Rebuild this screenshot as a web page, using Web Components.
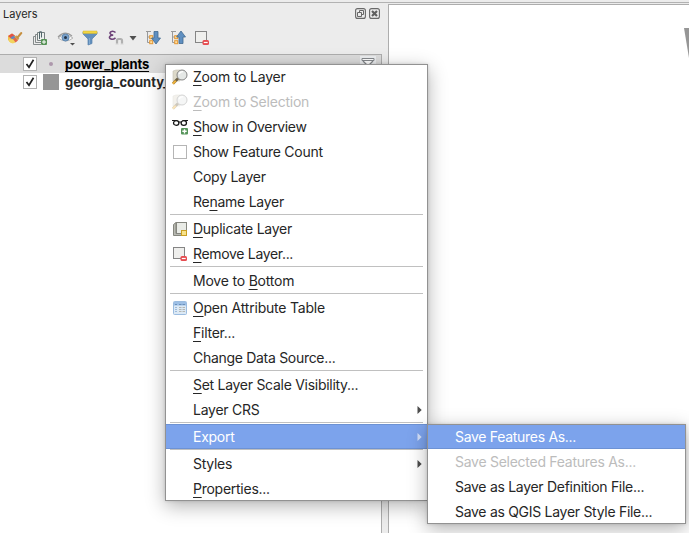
<!DOCTYPE html>
<html lang="en">
<head>
<meta charset="utf-8">
<title>Layers</title>
<style>
html,body{margin:0;height:100%;overflow:hidden}
body{font-family:Inter,"Liberation Sans",sans-serif;color:#262626;background:#ececec}
</style>
</head>
<body>
<gis-window></gis-window>
<script>
const ICONS = {
  style: ['0 0 16 16', `<path d="M1 6L5 3.500L11 8L8 12.500Q3 13.500 1 10Z" fill="#efc04f"/><path d="M1 6L5 3.500L8 5.500L4 8.500Z" fill="#e45344"/><path d="M3.500 7.500L7 5.500L8.500 8L5 9.500Z" fill="#6488bd"/><path d="M2 9L6 9.500L9.500 11.500L6 13.500Q3 13 2 11.500Z" fill="#f2d45f"/><path d="M6 9L8.500 7.500L11 10.500L8.500 12.500Z" fill="#e4674b"/><path d="M8.500 6L11.500 9.500" stroke="#d4a052" stroke-width="2.200"/><path d="M10.500 7.500L14.300 3" stroke="#c69040" stroke-width="2" stroke-linecap="round"/>`],
  group: ['0 0 16 16', `<path d="M3.500 6.500H1.500V14.500H9M5.500 4.500H3.500V12.500H9" fill="none" stroke="#858b8b"/><path d="M9 10.500H5.500V2.500H12.500V9" fill="#edf0ee" stroke="#778080"/><path d="M7.500 9V2Q8.500 0 9.500 2V7.500" fill="none" stroke="#52676d"/><rect x="9" y="9" width="6" height="6" rx="1" fill="#579257"/><path d="M10 12H14M12 10V14" stroke="#fff"/>`],
  eye: ['0 0 18 16', `<path d="M1 8Q8 2 16 8Q9 14 1 8Z" fill="#f6f6f6" stroke="#b8b8b8"/><path d="M1 7Q8 0 15 6" fill="none" stroke="#999" stroke-width="1.200"/><circle cx="8.500" cy="7.500" r="3.500" fill="#7ba3cd" stroke="#5f88b0"/><circle cx="8.500" cy="7.500" r="1.500" fill="#243549"/><path d="M13 13H18L15.500 15.500Z" fill="#505050"/>`],
  filter: ['0 0 16 16', `<path d="M1 2H15V4L10 9V13.500L6 15V9L1 4Z" fill="#628fbd" stroke="#5681ac" stroke-width=".7"/><path d="M1 1H15V3.500H1Z" fill="#f2d541" stroke="#d0b52f" stroke-width=".5"/><path d="M7.500 8V14" stroke="#82aad0"/>`],
  expr: ['0 0 17 16', `<path d="M8.500 2.500Q6.500 .7 4.500 1.400C2 2.200 2.800 5.200 6.200 5.100C2.200 5 1.400 8.300 4 9Q6.300 9.700 8.500 7.800" fill="none" stroke="#6d4378" stroke-width="1.600"/><path d="M10 15V10.500Q10 9 11.500 9H13.500Q15 9 15 10.500V15" fill="none" stroke="#b0b0b0" stroke-width="2.200"/><path d="M9 13.500H11V15H9ZM14 13.500H16V15H14Z" fill="#e0e0e0"/>`],
  caret: ['0 0 8 5', `<path d="M.5 0H7.500L4 4.500Z" fill="#505050"/>`],
  expand: ['0 0 16 16', `<path d="M1 1.500H6M2.500 2V12.500H5M2.500 7H5" fill="none" stroke="#999"/><rect x="4.700" y="5.700" width="3" height="3" fill="#ffe0a0" stroke="#e49734"/><rect x="4.700" y="10.700" width="3" height="3" fill="#ffe0a0" stroke="#e49734"/><path d="M9 1.500H13V8H15.500L11 14L6.500 8H9Z" fill="#5f8fc1" stroke="#41698f" stroke-width=".8"/>`],
  collapse: ['0 0 16 16', `<path d="M1 1.500H6M2.500 2V12.500H5M2.500 7H5" fill="none" stroke="#999"/><rect x="4.700" y="5.700" width="3" height="3" fill="#ffe0a0" stroke="#e49734"/><rect x="4.700" y="10.700" width="3" height="3" fill="#ffe0a0" stroke="#e49734"/><path d="M9 13.500H13V7H15.500L11 1L6.500 7H9Z" fill="#5f8fc1" stroke="#41698f" stroke-width=".8"/>`],
  remove: ['0 0 16 16', `<rect x="1.500" y="1.500" width="11" height="11" fill="#efefed" stroke="#858585"/><rect x="8.500" y="10" width="6.500" height="5" rx="1.500" fill="#e64c50"/><path d="M9.800 12.500H13.700" stroke="#fff" stroke-width="1.200"/>`],
  zoom: ['0 0 16 16', `<path d="M1 2L4 1H8V12H1Z" fill="#ddd9c9" stroke="#c4c0b3" stroke-width=".6"/><path d="M6 9.500L1 14.500" stroke="#6f6245" stroke-width="2.600"/><path d="M3.800 11.700L.8 14.700" stroke="#edb13a" stroke-width="2.200"/><circle cx="10" cy="6" r="5" fill="#e5e8e6" stroke="#858585"/><path d="M7.200 5Q8 2.700 11 2.700" fill="none" stroke="#fff" stroke-width="1.300"/>`],
  glasses: ['0 0 16 16', `<path d="M0 1.500H4.500L7 3H9L11.500 1.500H16" fill="none" stroke="#171717"/><ellipse cx="4.200" cy="4" rx="2.700" ry="2.300" fill="#fff" stroke="#171717" stroke-width="1.300"/><ellipse cx="11.800" cy="4" rx="2.700" ry="2.300" fill="#fff" stroke="#171717" stroke-width="1.300"/><rect x="9" y="9" width="7" height="6.500" rx="1" fill="#559459"/><path d="M10.300 12.300H14.700M12.500 10.200V14.400" stroke="#fff" stroke-width="1.400"/>`],
  box: ['0 0 16 16', `<rect x="1.500" y="1.500" width="13" height="13" fill="#fff" stroke="#b5b5b5"/>`],
  duplicate: ['0 0 16 16', `<path d="M1.500 3.500L4 1.500V12.500H11V14.500H1.500Z" fill="#b8b9b2" stroke="#85867d"/><rect x="4.500" y="1.500" width="10" height="11" fill="#e9ebe6" stroke="#85867f"/><rect x="9.500" y="9.500" width="5" height="5" fill="#f7e28b" stroke="#c99f23"/>`],
  table: ['0 0 16 16', `<rect x="1.500" y="1.500" width="13" height="13" rx="1" fill="#dce9f5" stroke="#9bbce0"/><path d="M2 2H14V5.500H2Z" fill="#9dbfe5"/><path d="M3 4.500H5M7 4.500H9.500M10.500 4.500H13" stroke="#6b90bb"/><path d="M3 7.500H5M3 9.500H5M3 11.500H5" stroke="#9cbbdb"/><path d="M7 7.500H9.500M10.500 7.500H13M7 9.500H9.500M10.500 9.500H13M7 11.500H9.500M10.500 11.500H13" stroke="#b4b6b2"/>`],
  float: ['0 0 11 11', `<rect x=".6" y=".6" width="9.800" height="9.800" rx="2" fill="none" stroke="#686868" stroke-width="1.100"/><path d="M4.500 4V2.500H8.500V6.500H7M2.500 4.500H6.500V8.500H2.500Z" fill="none" stroke="#686868"/>`],
  close: ['0 0 11 11', `<rect x=".6" y=".6" width="9.800" height="9.800" rx="2" fill="none" stroke="#686868" stroke-width="1.100"/><path d="M3 3L8 8M8 3L3 8" stroke="#606060" stroke-width="2.200"/>`],
  indicator: ['0 0 16 18', `<path d="M0 1H16V18H0Z" fill="#eceef0"/><path d="M2 3.500H14V5.500H2Z" fill="#fff" stroke="#85888c"/><path d="M3 6L7 10V16H9V10L13 6" fill="#fff" stroke="#85888c" stroke-width="1.300"/>`],
  check: ['0 0 14 14', `<rect x=".5" y=".5" width="13" height="13" fill="#fff" stroke="#b2b2b2"/><path d="M3.500 7L6 10.200L10.500 2.800" fill="none" stroke="#222" stroke-width="1.700"/>`],
  arrow: ['0 0 5 8', `<path d="M.5 0L4.700 4L.5 8Z" fill="currentColor"/>`]
};

function shadow(el, html) {
  el.attachShadow({mode: 'open'}).innerHTML = html;
}

class GisIcon extends HTMLElement {
  connectedCallback() {
    const [box, body] = ICONS[this.getAttribute('name')];
    const [, , w, h] = box.split(' ');
    shadow(this, `<style>:host{display:block;flex:none;width:${w}px;height:${h}px}svg{display:block}</style>
      <svg width="${w}" height="${h}" viewBox="${box}" fill="none">${body}</svg>`);
  }
}

class MenuItem extends HTMLElement {
  connectedCallback() {
    const icon = this.getAttribute('icon');
    shadow(this, `<style>
      :host{display:grid;grid-template-columns:21px 1fr 5px;align-items:center;height:25px;box-sizing:border-box;padding:0 5px 0 6px;font-size:14px;line-height:20px;letter-spacing:-.26px;color:#262626;white-space:nowrap}
      :host([sub]){grid-template-columns:1fr 5px;padding-left:27px}
      :host([disabled]){color:#bcbcbc}
      :host([disabled]) gis-icon{opacity:.35}
      :host([active]){background:#7ca3ec;color:#fff;box-shadow:inset 0 1px #6d92d4,inset 0 -1px #6d92d4}
      .arrow{color:#4c4c4c}:host([active]) .arrow{color:#d3e0fa}
      ::slotted(u){text-decoration:underline;text-decoration-thickness:1px;text-underline-offset:3px;text-decoration-skip-ink:none}
      </style>${this.hasAttribute('sub') ? '' : `<span>${icon ? `<gis-icon name="${icon}"></gis-icon>` : ''}</span>`}
      <span class="label"><slot></slot></span>
      ${this.hasAttribute('more') ? '<gis-icon class="arrow" name="arrow"></gis-icon>' : ''}`);
  }
}

class MenuLine extends HTMLElement {
  connectedCallback() {
    shadow(this, `<style>:host{display:block;height:1px;margin:0 4px 1px;background:#c0c0c0}</style>`);
  }
}

class PopupMenu extends HTMLElement {
  connectedCallback() {
    shadow(this, `<style>:host{display:block;position:absolute;background:#fff;box-shadow:0 5px 18px rgba(0,0,0,.3),0 0 3px rgba(0,0,0,.15);padding:0 1px}
      :host::after{content:"";position:absolute;inset:0;border:1px solid #929292;pointer-events:none}</style><slot></slot>`);
  }
}

class LayerRow extends HTMLElement {
  connectedCallback() {
    shadow(this, `<style>:host{display:flex;align-items:center;height:18px;padding:0 5px 0 23px;font-size:13px;font-weight:700;line-height:18px;white-space:nowrap}
      :host([selected]){background:#dcdcdc;letter-spacing:-.15px}
      .symbol{width:16px;height:16px;margin:0 6px 0 6px;display:grid;place-items:center}
      .dot{width:4px;height:4px;border-radius:50%;background:#ad98ac}
      .fill{width:16px;height:16px;background:#969696}
      .label{flex:1}:host([selected]) .label{text-decoration:underline;text-decoration-thickness:1px;text-underline-offset:2px;text-decoration-skip-ink:none;color:#000}
      </style><gis-icon name="check"></gis-icon><span class="symbol"><i class="${this.getAttribute('symbol')}"></i></span>
      <span class="label"><slot></slot></span>${this.hasAttribute('selected') ? '<gis-icon name="indicator"></gis-icon>' : ''}`);
  }
}

class LayersPanel extends HTMLElement {
  connectedCallback() {
    shadow(this, `<style>
      :host{display:flex;flex-direction:column;width:382px;height:100%}
      header{display:flex;gap:3px;align-items:center;height:21px;padding:0 2px 0 3px;font-size:11px;line-height:20px;color:#262626}
      header span{flex:1;padding-top:1px}
      nav{display:flex;align-items:center;box-sizing:border-box;height:30px;padding:0 0 2px 7px;gap:9px}
      .tree{flex:1;border:1px solid #adadad;border-width:1px 1px 0 0;background:#fff}
      </style>
      <header><span>Layers</span><gis-icon name="float"></gis-icon><gis-icon name="close"></gis-icon></header>
      <nav><gis-icon name="style"></gis-icon><gis-icon name="group"></gis-icon><gis-icon name="eye"></gis-icon><gis-icon name="filter" style="margin-left:-2px"></gis-icon><gis-icon name="expr"></gis-icon><gis-icon name="caret" style="margin-left:-4px"></gis-icon><gis-icon name="expand" style="margin-left:-1px"></gis-icon><gis-icon name="collapse"></gis-icon><gis-icon name="remove" style="margin-left:-1px"></gis-icon></nav>
      <div class="tree"><layer-row selected symbol="dot">power_plants</layer-row><layer-row symbol="fill">georgia_county_</layer-row></div>`);
  }
}

class MapCanvas extends HTMLElement {
  connectedCallback() {
    shadow(this, `<style>:host{display:flex;justify-content:flex-end;flex:1;margin-left:6px;border:1px solid #adadad;border-width:1px 0 0 1px;background:#fff}svg{display:block;margin-top:23px}</style>
      <svg width="5" height="30" viewBox="0 0 5 30"><path d="M0 0H5V30Z" fill="#969696"/></svg>`);
  }
}

class GisWindow extends HTMLElement {
  connectedCallback() {
    shadow(this, `<style>
      :host{display:flow-root;position:relative;width:689px;height:533px;overflow:hidden;background:#ececec}
      .edge{height:1px;margin-top:2px;background:#b2b2b2}
      main{display:flex;height:530px}
      layers-panel{flex:none}
      map-canvas{margin-top:1px}
      .context{left:165px;top:64px;width:261px;height:437px}
      .export{left:427px;top:424px;width:257px;height:100px}
      </style>
      <div class="edge"></div>
      <main><layers-panel></layers-panel><map-canvas></map-canvas></main>
      <popup-menu class="context">
        <menu-item icon="zoom" style="letter-spacing:-.2px"><u>Z</u>oom to Layer</menu-item>
        <menu-item icon="zoom" disabled style="letter-spacing:-.22px"><u>Z</u>oom to Selection</menu-item>
        <menu-item icon="glasses" style="letter-spacing:-.34px"><u>S</u>how in Overview</menu-item>
        <menu-item icon="box">Show Feature Count</menu-item>
        <menu-item>Copy Layer</menu-item>
        <menu-item>Re<u>n</u>ame Layer</menu-item>
        <menu-line></menu-line>
        <menu-item icon="duplicate"><u>D</u>uplicate Layer</menu-item>
        <menu-item icon="remove" style="letter-spacing:-.32px"><u>R</u>emove Layer...</menu-item>
        <menu-line></menu-line>
        <menu-item style="letter-spacing:-.2px">Move to <u>B</u>ottom</menu-item>
        <menu-line></menu-line>
        <menu-item icon="table" style="letter-spacing:-.21px"><u>O</u>pen Attribute Table</menu-item>
        <menu-item><u>F</u>ilter...</menu-item>
        <menu-item style="letter-spacing:-.3px">Change Data Source...</menu-item>
        <menu-line></menu-line>
        <menu-item style="letter-spacing:-.28px"><u>S</u>et Layer Scale Visibility...</menu-item>
        <menu-item more>Layer CRS</menu-item>
        <menu-line></menu-line>
        <menu-item active more>Export</menu-item>
        <menu-line></menu-line>
        <menu-item more>Styles</menu-item>
        <menu-item><u>P</u>roperties...</menu-item>
      </popup-menu>
      <popup-menu class="export">
        <menu-item sub active style="letter-spacing:-.3px">Save Features As...</menu-item>
        <menu-item sub disabled style="letter-spacing:-.27px">Save Selected Features As...</menu-item>
        <menu-item sub style="letter-spacing:-.29px">Save as Layer Definition File...</menu-item>
        <menu-item sub style="letter-spacing:-.29px">Save as QGIS Layer Style File...</menu-item>
      </popup-menu>`);
  }
}

for (const [name, type] of [['gis-icon', GisIcon], ['menu-item', MenuItem], ['menu-line', MenuLine], ['popup-menu', PopupMenu], ['layer-row', LayerRow], ['layers-panel', LayersPanel], ['map-canvas', MapCanvas], ['gis-window', GisWindow]])
  customElements.define(name, type);
</script>
</body>
</html>
